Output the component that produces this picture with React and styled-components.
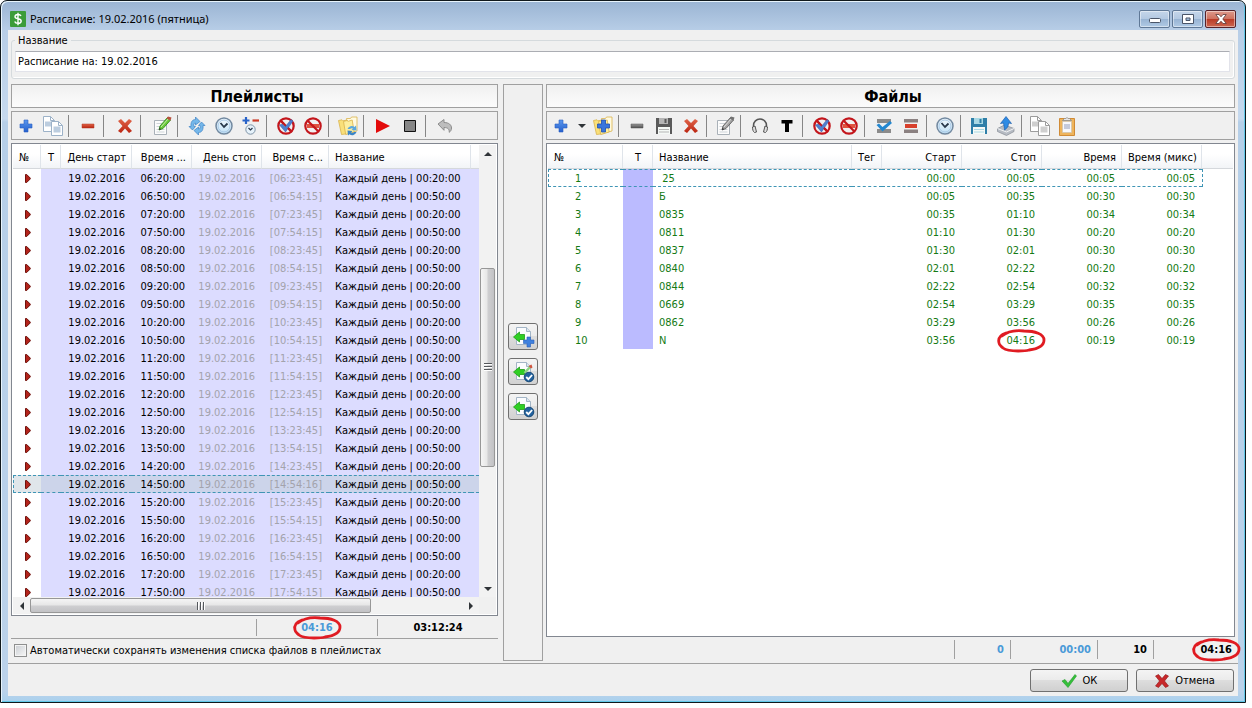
import React from "react"
import styled, { createGlobalStyle } from "styled-components"

const playlistTimes = ["06", "07", "08", "09", "10", "11", "12", "13", "14", "15", "16", "17"]

const playlists = playlistTimes.flatMap((hour) => [
    { start: `${hour}:20:00`, stop: `[${hour}:23:45]`, name: "Каждый день | 00:20:00" },
    {
        start: `${hour}:50:00`,
        stop: hour === "14" ? "[14:54:16]" : `[${hour}:54:15]`,
        name: "Каждый день | 00:50:00",
        selected: hour === "14",
    },
])

const files = [
    { name: "\u00a025", start: "00:00", stop: "00:05", time: "00:05", selected: true },
    { name: "Б", start: "00:05", stop: "00:35", time: "00:30" },
    { name: "0835", start: "00:35", stop: "01:10", time: "00:34" },
    { name: "0811", start: "01:10", stop: "01:30", time: "00:20" },
    { name: "0837", start: "01:30", stop: "02:01", time: "00:30" },
    { name: "0840", start: "02:01", stop: "02:22", time: "00:20" },
    { name: "0844", start: "02:22", stop: "02:54", time: "00:32" },
    { name: "0669", start: "02:54", stop: "03:29", time: "00:35" },
    { name: "0862", start: "03:29", stop: "03:56", time: "00:26" },
    { name: "N", start: "03:56", stop: "04:16", time: "00:19", marked: true },
]

const Icon = ({ children, size = 22 }) => (
    <svg width={size} height={size} viewBox="0 0 22 22" fill="none" aria-hidden="true">
        {children}
    </svg>
)

// shared pieces of the icons
const PlusShape = () => (
    <path d="M9 5h4v4h4v4h-4v4H9v-4H5V9h4z" fill="url(#blue)" stroke="#2a5fc4" strokeWidth=".6" />
)
const PagesShape = ({ line, fill }) => (
    <g stroke={line}>
        <path d="M1.500 1.500h7l4 4v11h-11z" fill="#fff" />
        <path d="M8.500 1.500v4h4" />
        <path d="M3 6.500h6v5H3z" fill={fill} stroke="none" />
        <path d="M9.500 6.500h7l4 4v10h-11z" fill="#fff" />
        <path d="M16.500 6.500v4h4" />
        <path d="M11.500 11.500h7v6h-7z" fill={fill} stroke="none" />
    </g>
)
const CrossShape = () => (
    <path d="M4 6l3-2 4 4 4-4 3 2-4.500 5L18 16l-3 2-4-4.500L7 18l-3-2 4.500-5z" fill="url(#red)" />
)
const ClockShape = () => (
    <g>
        <circle cx="11" cy="11" r="8" fill="url(#face)" stroke="#7289a0" strokeWidth="1.500" />
        <circle cx="11" cy="11" r="6" stroke="#a9c9e6" />
        <path d="M7.500 8l3.500 4 3.500-3.500" stroke="#28384a" strokeWidth="1.800" />
    </g>
)
const BanShape = () => (
    <g stroke="#c3161c" strokeWidth="2.200">
        <circle cx="11" cy="11" r="7.700" />
        <path d="M5.500 5.500l11 11" />
    </g>
)
const FolderShape = () => (
    <g stroke="#d9b24c" strokeWidth=".8">
        <path d="M9.500 3.500h4l1-1.500h5.500v14l-8 2z" fill="#fffae0" />
        <path d="M1.500 5.500L5 4.800l1 1 4-.8 2 13.500-7.500 1z" fill="#f9e07a" />
        <path d="M6.500 6.500l3.500-1 1.200.8 4-1.300 2 12-8.500 2.500z" fill="#fdee9e" />
    </g>
)
const FloppyShape = ({ body, label }) => (
    <g>
        <path d="M3 3h16v16H3z" fill={body} />
        <path d="M6 3h9v6H6z" fill={label} />
        <path d="M11.500 4h2v4h-2z" fill={body} />
        <path d="M5 12h12v7H5z" fill="#f5f9f6" />
        <path d="M6 14.500h10M6 17h10" stroke={label} />
    </g>
)
const NoteShape = ({ pencil, edge, tip }) => (
    <g>
        <path d="M3.500 5.500h12v14h-12z" fill="#fcfcfc" stroke="#a9b1b8" />
        <path d="M5.500 8.500h6M5.500 11.500h5M5.500 14.500h8M5.500 17h8" stroke="#ced4d8" />
        <path d="M8 15l1-4 7.500-8.500 3 2.500-7.500 8.500z" fill={pencil} stroke={edge} strokeWidth=".9" />
        <path d="M10 12l7-8" stroke="#fff" opacity=".6" />
        <path d="M15.500 3.500l1.500-2 3.500 1-1 3z" fill={tip} />
        <path d="M8 15l.6-2.200 1.500 1.400z" fill="#333" />
    </g>
)

const PlusIcon = () => <Icon><PlusShape /></Icon>
const CrossIcon = () => <Icon><CrossShape /></Icon>
const ClockIcon = () => <Icon><ClockShape /></Icon>
const CopyIcon = () => <Icon><PagesShape line="#9db2c8" fill="#bccddf" /></Icon>
const CopyGreyIcon = () => <Icon><PagesShape line="#9c9c9c" fill="#cfcfcf" /></Icon>
const MinusIcon = () => (
    <Icon><path d="M5 9h12v4H5z" fill="url(#red)" stroke="#b03a25" strokeWidth=".5" /></Icon>
)
const MinusGreyIcon = () => (
    <Icon><path d="M5 9h12v4H5z" fill="url(#grey)" stroke="#555" strokeWidth=".5" /></Icon>
)
const EditIcon = () => <Icon><NoteShape pencil="#6ccb3a" edge="#2f8b1e" tip="#b9513f" /></Icon>
const EditGreyIcon = () => <Icon><NoteShape pencil="#a5a5a5" edge="#5f5f5f" tip="#737373" /></Icon>
const RefreshIcon = () => (
    <Icon>
        <g fill="#74b7ea" stroke="#3f82c4" strokeWidth=".7">
            <path d="M5 11.500C4.500 7.500 6 4.500 9.500 4.500V2L14 6.500 9.500 10V8C7.800 8 7.500 9.500 8 11.500h1.500L6.500 15 3 11.500z" />
            <path d="M17 10.500c.5 4-1 7-4.500 7V20L8 15.500l4.500-3.500v2c1.700 0 2-1.500 1.500-3.500h-1.500L15.500 7l3.500 3.500z" />
        </g>
    </Icon>
)
const AddTimeIcon = () => (
    <Icon>
        <path d="M2.500 5.500h7M6 2v7" stroke="#2863c8" strokeWidth="2.200" />
        <path d="M12.500 5.500h6.500" stroke="#cc3a25" strokeWidth="2.200" />
        <circle cx="10.500" cy="14.500" r="4.700" fill="#e6f2fa" stroke="#7e93a6" />
        <path d="M8.500 13l2 2 2-2" stroke="#28384a" strokeWidth="1.200" />
    </Icon>
)
const BanCheckIcon = () => (
    <Icon>
        <BanShape />
        <path d="M4.500 10l3-1 2.500 3 6-7.500 2 1.500L10.500 17z" fill="#4f7fce" stroke="#3a5ba8" strokeWidth=".5" />
        <path d="M5.500 5.500l3.500 3.500M13 13l4 4" stroke="#c3161c" strokeWidth="2" />
    </Icon>
)
const BanMinusIcon = () => (
    <Icon>
        <path d="M5 9h12v4H5z" fill="#e0533f" />
        <BanShape />
    </Icon>
)
const FolderIcon = () => (
    <Icon>
        <FolderShape />
        <path d="M10.500 14a4.500 4.500 0 0 1 7-2l1.500-1.500.5 5-5-.5 1.500-1.500a2.500 2.500 0 0 0-3 .5z" fill="#5ba8de" />
        <path d="M19.500 17a4.500 4.500 0 0 1-7 2.200L11 20.500l-.5-5 5 .5-1.500 1.500a2.500 2.500 0 0 0 3-.5z" fill="#3c86c8" />
    </Icon>
)
const FolderPlusIcon = () => (
    <Icon>
        <FolderShape />
        <path d="M9.500 5h4v4h4v4h-4v4h-4v-4h-4V9h4z" fill="#3a76dc" stroke="#1f4fb0" strokeWidth=".8" />
    </Icon>
)
const PlayIcon = () => <Icon><path d="M4 4l14 7-14 7z" fill="#e30b0b" /></Icon>
const StopIcon = () => (
    <Icon><path d="M5.500 5.500h11v11h-11z" fill="#868686" stroke="#111" /></Icon>
)
const UndoIcon = () => (
    <Icon>
        <path d="M4 9l6-4.500v3c5 0 7.500 2.500 7.500 5.500 0 2-.8 3.300-2.300 4.300.3-3-1.200-4.800-5.200-4.800v2.800z" fill="#bdbdbd" stroke="#8c8c8c" />
    </Icon>
)
const HeadphonesIcon = () => (
    <Icon>
        <path d="M4.500 13V10.500a6.500 6.500 0 0 1 13 0V13" stroke="#555" strokeWidth="1.500" />
        <path d="M3.500 12l2.500-1 1.500 6-2 .5c-1.500-1-2-3-2-5.500zM18.500 12L16 11l-1.500 6 2 .5c1.500-1 2-3 2-5.500z" fill="#ddd" stroke="#555" />
    </Icon>
)
const TextIcon = () => <Icon><path d="M5.500 5h11v3.500H13V17H9V8.500H5.500z" fill="#000" /></Icon>
const CheckRowsIcon = () => (
    <Icon>
        <path d="M4 4h14v4H4zM4 14h14v4H4z" fill="#8b8b8b" />
        <path d="M3.500 10L6 8.500l3.500 3.500 7.500-6 2 2-9.500 8.500z" fill="#2387d0" />
    </Icon>
)
const MinusRowsIcon = () => (
    <Icon>
        <path d="M4 4h14v3.500H4zM4 14.500h14V18H4z" fill="#8b8181" />
        <path d="M5 9h12v4H5z" fill="#d8402c" />
    </Icon>
)
const UploadIcon = () => (
    <Icon>
        <path d="M2.500 13.500l7-3.500 9.500 3.500v3l-7.500 4-9-4z" fill="#b7bcc4" stroke="#858b94" strokeWidth=".7" />
        <path d="M2.500 13.500l9 3.500 7.500-3.500" stroke="#f2f4f6" />
        <path d="M11 1.500l5.500 7-3-.5c0 3-1 5-4 7C9.500 13 9 11 8.500 8L5.500 8.500z" fill="#2f8be4" stroke="#1d5fae" strokeWidth=".7" />
    </Icon>
)
const PasteIcon = () => (
    <Icon>
        <path d="M3.500 3.500h15v17h-15z" fill="#eeb45c" stroke="#d08b36" />
        <path d="M6.500 6.500h9v11h-9z" fill="#f7f8fc" stroke="#cfc3b0" strokeWidth=".7" />
        <path d="M8 9h6v5H8z" fill="#c5cadb" />
        <path d="M6.500 5.500l2-2h1.200a1.500 1.500 0 0 1 2.600 0h1.200l2 2z" fill="#e6e6e6" stroke="#8c8c8c" strokeWidth=".8" />
    </Icon>
)
const MoveIcon = ({ kind }) => (
    <svg width="24" height="24" viewBox="0 0 24 24" fill="none" aria-hidden="true">
        <path d="M5.500 2.500h10l4 4v13h-14z" fill="#fbfcfe" stroke="#a3b5c6" />
        <path d="M15.500 2.500v4h4" stroke="#a3b5c6" fill="#dbe5ee" />
        <path d="M2.500 12L8.500 7v2.500h5v5h-5V17z" fill="#2fcf24" stroke="#1e9c18" strokeWidth=".8" />
        {kind === "edit" && <path d="M13.500 13l6-6.500" stroke="#8ed684" strokeWidth="2.500" />}
        {kind === "edit" && <path d="M17.500 6l3-1.500 1 3-1.500 1z" fill="#d0543e" />}
        {kind === "add" ? (
            <path d="M16 12h3.500v3H23v3.500h-3.500V22H16v-3.500h-3.500V15H16z" fill="#3f80de" stroke="#2a5fb8" strokeWidth=".6" />
        ) : (
            <g>
                <circle cx="18" cy="17" r="4.800" fill="#23629f" stroke="#174875" />
                <path d="M15.200 17l2.200 2.200 3.700-4.200" stroke="#fff" strokeWidth="1.800" />
            </g>
        )}
    </svg>
)

const Gradients = () => (
    <HiddenSvg aria-hidden="true">
        <defs>
            <linearGradient id="blue" x1="0" y1="0" x2="0" y2="1">
                <stop offset="0" stopColor="#5b97ee" />
                <stop offset="1" stopColor="#2560cc" />
            </linearGradient>
            <linearGradient id="red" x1="0" y1="0" x2="0" y2="1">
                <stop offset="0" stopColor="#e0654a" />
                <stop offset="1" stopColor="#bb2410" />
            </linearGradient>
            <linearGradient id="grey" x1="0" y1="0" x2="0" y2="1">
                <stop offset="0" stopColor="#9a9a9a" />
                <stop offset="1" stopColor="#4f4f4f" />
            </linearGradient>
            <linearGradient id="face" x1="0" y1="0" x2="0" y2="1">
                <stop offset="0" stopColor="#f4fafe" />
                <stop offset="1" stopColor="#bfe0f5" />
            </linearGradient>
        </defs>
    </HiddenSvg>
)

const RedCircle = () => (
    <CircleMark viewBox="0 0 48 24" fill="none" aria-hidden="true">
        <path
            d="M9 4C3 6 1 10 2 14c0 2 2 3 4 5 4 3 9 3 15 3 5 0 8 0 11-1 8-1 15-4 15-10C47 5 38 2 27 2 18 1 10 3 5 7"
            stroke="#e01b22"
            strokeWidth="2.800"
            strokeLinecap="round"
        />
    </CircleMark>
)

const leftTools = [
    ["Добавить", PlusIcon], ["Копировать", CopyIcon], 8,
    ["Убрать", MinusIcon], 10,
    ["Удалить", CrossIcon], 10,
    ["Изменить", EditIcon], 8,
    ["Обновить", RefreshIcon], ["Время", ClockIcon], ["Сдвиг времени", AddTimeIcon], 8,
    ["Снять отметки", BanCheckIcon], ["Снять запреты", BanMinusIcon], 8,
    ["Папка", FolderIcon], 8,
    ["Пуск", PlayIcon], ["Остановить", StopIcon], 8,
    ["Отменить", UndoIcon],
]

const rightTools = [
    ["Добавить", PlusIcon], ["Ещё", "menu"], ["Добавить папку", FolderPlusIcon], 7,
    ["Убрать", MinusGreyIcon],
    ["Сохранить", () => <Icon><FloppyShape body="#5a5a5a" label="#b5b5b5" /></Icon>],
    ["Удалить", CrossIcon], 7,
    ["Изменить", EditGreyIcon], 8,
    ["Прослушать", HeadphonesIcon], ["Текст", TextIcon], 8,
    ["Снять отметки", BanCheckIcon], ["Снять запреты", BanMinusIcon], 8,
    ["Отметить строки", CheckRowsIcon], ["Убрать строки", MinusRowsIcon], 7,
    ["Время", ClockIcon], 7,
    ["Сохранить список", () => <Icon><FloppyShape body="#2f7fa8" label="#a8d8e4" /></Icon>],
    ["Загрузить", UploadIcon], 7,
    ["Копировать", CopyGreyIcon], ["Вставить", PasteIcon],
]

const Tools = ({ items }) => (
    <Toolbar>
        {items.map((item, index) => {
            if (typeof item === "number") return <Separator key={index} $width={item} />
            const [label, Glyph] = item
            if (Glyph === "menu") {
                return <ToolButton key={index} aria-label={label} $narrow><Arrow $dir="down" $size={4} /></ToolButton>
            }
            return <ToolButton key={index} aria-label={label}><Glyph /></ToolButton>
        })}
    </Toolbar>
)

const App = () => {
    const [title, setTitle] = React.useState("Расписание на: 19.02.2016")
    const [autoSave, setAutoSave] = React.useState(false)

    return (
        <>
            <GlobalStyle />
            <Gradients />
            <Window>
                <TitleBar>
                    <AppIcon viewBox="0 0 16 16" fill="none" aria-hidden="true">
                        <rect width="16" height="16" rx="1" fill="#3c9c3a" />
                        <path d="M11 5C10.500 3.800 9.500 3.500 8 3.500 6 3.500 5 4.400 5 5.700 5 8.600 11.200 7 11.200 10c0 1.500-1.200 2.400-3.200 2.400-1.700 0-2.900-.6-3.300-1.900M8 1.800v12.400" stroke="#fff" strokeWidth="1.400" />
                    </AppIcon>
                    <TitleText>Расписание: 19.02.2016 (пятница)</TitleText>
                    <WindowButton aria-label="Свернуть">
                        <svg width="12" height="10"><rect x=".5" y="4.500" width="11" height="4" rx="1" fill="#fff" stroke="#4a5568" /></svg>
                    </WindowButton>
                    <WindowButton aria-label="Развернуть">
                        <svg width="12" height="10"><path d="M.5.5h11v9H.5zM4 4v2.500h4V4z" fill="#fff" fillRule="evenodd" stroke="#4a5568" /></svg>
                    </WindowButton>
                    <WindowButton aria-label="Закрыть" $close>
                        <svg width="12" height="10"><path d="M.8.5h3.200l2 2.300 2-2.300h3.200L7.800 5l3.400 4.500H8L6 7.200 4 9.500H.8L4.200 5z" fill="#fff" stroke="#5a3a3a" strokeWidth=".8" /></svg>
                    </WindowButton>
                </TitleBar>
                <Client>
                    <NameGroup>
                        <legend><label htmlFor="name">Название</label></legend>
                        <NameInput id="name" value={title} onChange={(e) => setTitle(e.target.value)} />
                    </NameGroup>
                    <Panels>
                        <Panel $grow={487}>
                            <Heading>Плейлисты</Heading>
                            <Tools items={leftTools} />
                            <List $scroll>
                                <TableArea>
                                    <Table>
                                        <colgroup>
                                            <col width="28" /><col width="20" /><col width="71" /><col width="60" />
                                            <col width="70" /><col width="67" /><col /><col width="8" />
                                        </colgroup>
                                        <thead>
                                            <tr>
                                                <Th>№</Th><Th $align="center">T</Th>
                                                <Th $align="right">День старт</Th><Th $align="right">Время ...</Th>
                                                <Th $align="right">День стоп</Th><Th $align="right">Время с...</Th>
                                                <Th>Название</Th><Th />
                                            </tr>
                                        </thead>
                                        <tbody>
                                            {playlists.map((item) => (
                                                <Row key={item.start} $selected={item.selected} $tint>
                                                    <MarkerCell>
                                                        <svg width="6" height="9" viewBox="0 0 6 9"><path d="M.5.500h1.200l3.500 3.500v1L1.700 8.500H.5z" fill="#b3231b" stroke="#6e120c" /></svg>
                                                    </MarkerCell>
                                                    <Td $bg="#dcdcff" />
                                                    <Td $bg="#dcdcff" $align="right">19.02.2016</Td>
                                                    <Td $bg="#dcdcff" $align="right">{item.start}</Td>
                                                    <Td $bg="#dcdcff" $align="right" $color="#a3a3ac">19.02.2016</Td>
                                                    <Td $bg="#dcdcff" $align="right" $color="#a3a3ac">{item.stop}</Td>
                                                    <Td $bg="#dcdcff">{item.name}</Td>
                                                    <Td $bg="#dcdcff" />
                                                </Row>
                                            ))}
                                        </tbody>
                                    </Table>
                                </TableArea>
                                <Scrollbar>
                                    <ScrollEnd><Arrow $dir="up" $size={4} /></ScrollEnd>
                                    <Space $grow={106} />
                                    <Thumb $grow={198}><Grip /></Thumb>
                                    <Space $grow={114} />
                                    <ScrollEnd><Arrow $dir="down" $size={4} /></ScrollEnd>
                                </Scrollbar>
                                <Scrollbar $horizontal>
                                    <ScrollEnd><Arrow $dir="left" $size={4} /></ScrollEnd>
                                    <Thumb $horizontal $grow={340}><Grip $horizontal /></Thumb>
                                    <Space $grow={91} />
                                    <ScrollEnd><Arrow $dir="right" $size={4} /></ScrollEnd>
                                </Scrollbar>
                                <ScrollCorner />
                            </List>
                            <StatusBar $lined>
                                <StatusCell $grow={246} />
                                <StatusCell $width={121} $color="#4a9ad8" $center><Marked>04:16<RedCircle /></Marked></StatusCell>
                                <StatusCell $width={120} $center>03:12:24</StatusCell>
                            </StatusBar>
                            <CheckLabel>
                                <CheckBox type="checkbox" checked={autoSave} onChange={() => setAutoSave(!autoSave)} />
                                Автоматически сохранять изменения списка файлов в плейлистах
                            </CheckLabel>
                        </Panel>
                        <MoveColumn>
                            <MoveButton aria-label="Добавить в плейлист"><MoveIcon kind="add" /></MoveButton>
                            <MoveButton aria-label="Изменить плейлист"><MoveIcon kind="edit" /></MoveButton>
                            <MoveButton aria-label="Применить к плейлисту"><MoveIcon kind="check" /></MoveButton>
                        </MoveColumn>
                        <Panel $grow={689}>
                            <Heading>Файлы</Heading>
                            <Tools items={rightTools} />
                            <List>
                                <TableArea>
                                    <Table>
                                        <colgroup>
                                            <col width="75" /><col width="30" /><col /><col width="30" /><col width="80" />
                                            <col width="80" /><col width="80" /><col width="80" /><col width="31" />
                                        </colgroup>
                                        <thead>
                                            <tr>
                                                <Th>№</Th><Th $align="center">T</Th><Th>Название</Th><Th>Тег</Th>
                                                <Th $align="right">Старт</Th><Th $align="right">Стоп</Th>
                                                <Th $align="right">Время</Th><Th $align="right">Время (микс)</Th><Th />
                                            </tr>
                                        </thead>
                                        <tbody>
                                            {files.map((file, index) => (
                                                <Row key={index} $selected={file.selected} $green>
                                                    <NumberCell>{index + 1}</NumberCell>
                                                    <Td $bg="#bbbbff" />
                                                    <Td>{file.name}</Td>
                                                    <Td />
                                                    <Td $align="right">{file.start}</Td>
                                                    <Td $align="right">
                                                        {file.marked ? <Marked>{file.stop}<RedCircle /></Marked> : file.stop}
                                                    </Td>
                                                    <Td $align="right">{file.time}</Td>
                                                    <Td $align="right">{file.time}</Td>
                                                    <RestCell />
                                                </Row>
                                            ))}
                                        </tbody>
                                    </Table>
                                </TableArea>
                            </List>
                            <StatusBar>
                                <StatusCell $grow={408} />
                                <StatusCell $width={56} $color="#4a9ad8">0</StatusCell>
                                <StatusCell $width={87} $color="#4a9ad8">00:00</StatusCell>
                                <StatusCell $width={56}>10</StatusCell>
                                <StatusCell $width={81} $flush><Marked>04:16<RedCircle /></Marked></StatusCell>
                            </StatusBar>
                        </Panel>
                    </Panels>
                    <Footer>
                        <DialogButton>
                            <svg width="16" height="14" viewBox="0 0 16 14"><path d="M1 7l3-1.500 3 4L14 .500l1.500 1.500L7 13.500z" fill="#35c03a" stroke="#239a2c" strokeWidth=".6" /></svg>
                            ОК
                        </DialogButton>
                        <DialogButton>
                            <svg width="14" height="14" viewBox="0 0 14 14"><path d="M.5 2L3.500.500 7 4.500l3.500-4 3 1.500L9.500 7l4 5-3 1.500L7 9.500l-3.500 4-3-1.500 4-5z" fill="#c8282a" stroke="#8e1418" strokeWidth=".6" /></svg>
                            Отмена
                        </DialogButton>
                    </Footer>
                </Client>
            </Window>
        </>
    )
}

const GlobalStyle = createGlobalStyle`
    * {
        box-sizing: border-box;
    }
    body {
        margin: 0;
        background: #ffffff;
        overflow: hidden;
    }
    body, button, input {
        font-family: "DejaVu Sans Condensed", "Noto Sans", sans-serif;
        font-size: 11px;
        color: #000000;
    }
`
const HiddenSvg = styled.svg`
    position: absolute;
    width: 0;
    height: 0;
`
const Window = styled.div`
    display: flex;
    flex-direction: column;
    height: calc(100vh - 5px);
    margin-right: 6px;
    padding: 0 7px 6px 7px;
    border: 1px solid #10181c;
    border-radius: 7px 7px 0 0;
    box-shadow: inset 1px 1px 0 #e8f4fc, inset -1px -1px 0 #62c8e8;
    background: linear-gradient(#9ab4d3 0px, #b8cee7 30px, #c6d9ee 118px, #b6cfe8 121px, #bbd2ea 690px, #a9d1ee 100%);
`
const TitleBar = styled.header`
    display: flex;
    align-items: center;
    gap: 2px;
    height: 29px;
    padding: 6px 2px 0 2px;
    flex: none;
`
const AppIcon = styled.svg`
    width: 16px;
    height: 16px;
`
const TitleText = styled.h1`
    flex: 1;
    margin: 0 0 0 2px;
    font-family: "Noto Sans", sans-serif;
    font-size: 11px;
    font-weight: normal;
    line-height: 16px;
`
const WindowButton = styled.button`
    display: flex;
    align-items: center;
    justify-content: center;
    width: 31px;
    height: 18px;
    padding: 0;
    border: 1px solid ${props => props.$close ? "#56222a" : "#5f7896"};
    border-radius: 2px;
    box-shadow: inset 0 0 0 1px rgba(255, 255, 255, 0.45);
    background: ${props => props.$close
        ? "linear-gradient(#dd9a8c, #cf7260 48%, #b93a26 50%, #cc6650)"
        : "linear-gradient(#c5d6ea, #b3c9e2 48%, #97b3d3 50%, #b0cae5)"};
`
const Client = styled.main`
    display: flex;
    flex-direction: column;
    flex: 1;
    min-height: 0;
    padding: 3px 3px 0 3px;
    background: #f0f0f0;
`
const NameGroup = styled.fieldset`
    flex: none;
    margin: 0;
    padding: 3px 4px 6px 3px;
    border: 1px solid #d5dadd;
    border-radius: 3px;
    box-shadow: inset -1px -1px 0 #ffffff;

    legend {
        padding: 1px 3px 0 3px;
        line-height: 14px;
    }
`
const NameInput = styled.input`
    display: block;
    width: 100%;
    height: 21px;
    padding: 0 2px;
    border: 1px solid #e2e3ea;
    border-top-color: #abadb3;
    background: #ffffff;
`
const Panels = styled.div`
    display: flex;
    flex: 1;
    min-height: 0;
    margin-top: 5px;
`
const Panel = styled.section`
    display: flex;
    flex-direction: column;
    flex: ${props => props.$grow} 1 0;
    min-width: 0;
    gap: 3px;
`
const Heading = styled.h2`
    flex: none;
    height: 24px;
    margin: 0;
    padding-left: 5px;
    border: 1px solid #a0a0a0;
    background: linear-gradient(#f0f0f0, #fcfcfc);
    font-size: 16px;
    line-height: 23px;
    text-align: center;
`
const Toolbar = styled.div`
    display: flex;
    align-items: center;
    flex: none;
    height: 29px;
    border: 1px solid #a0a0a0;
`
const ToolButton = styled.button`
    display: flex;
    align-items: center;
    justify-content: center;
    width: ${props => props.$narrow ? 15 : 27}px;
    height: 26px;
    padding: 0;
    border: 0;
    background: none;
`
const Separator = styled.div`
    flex: none;
    width: ${props => props.$width}px;
    height: 22px;
    padding-left: 2px;

    &::before {
        content: "";
        display: block;
        width: 1px;
        height: 100%;
        background: #868686;
    }
`
const List = styled.div`
    display: grid;
    grid-template: ${props => props.$scroll ? "minmax(0, 1fr) 17px / minmax(0, 1fr) 17px" : "minmax(0, 1fr) / minmax(0, 1fr)"};
    flex: 1 1 0;
    min-height: 0;
    padding: 1px;
    border: 1px solid #828790;
    background: #ffffff;
`
const TableArea = styled.div`
    min-height: 0;
    overflow: hidden;
`
const Table = styled.table`
    width: 100%;
    table-layout: fixed;
    border-spacing: 0;
`
const Th = styled.th`
    height: 24px;
    padding: 2px 5px 0 6px;
    border-right: 1px solid #dfe4ea;
    border-bottom: 1px solid #d5d8dc;
    background: linear-gradient(#ffffff 40%, #f2f4f7);
    font-weight: normal;
    text-align: ${props => props.$align || "left"};
    white-space: nowrap;

    &:last-child {
        border-right: 0;
    }
`
const Td = styled.td`
    height: 18px;
    padding: 3px 7px 1px 6px;
    background: ${props => props.$bg || "transparent"};
    color: ${props => props.$color || "inherit"};
    line-height: 14px;
    text-align: ${props => props.$align || "left"};
    white-space: nowrap;
`
const MarkerCell = styled(Td)`
    padding: 0 0 0 12px;

    svg {
        display: block;
    }
`
const NumberCell = styled(Td)`
    padding-left: 27px;
`
const RestCell = styled(Td)``
const dashed = "1px dashed #3f95b5"
const Row = styled.tr`
    color: ${props => props.$green ? "#147a14" : "#000000"};

    ${props => props.$selected && `
        ${Td} {
            padding-top: 2px;
            padding-bottom: 0;
            border-top: ${dashed};
            border-bottom: ${dashed};
            ${props.$tint ? "background: #ccd4ea;" : ""}
        }
        ${MarkerCell} {
            padding-top: 0;
            ${props.$tint ? "background: #e0e6ea;" : ""}
        }
        td:first-child {
            border-left: ${dashed};
            ${props.$tint ? "padding-left: 11px;" : "padding-left: 26px;"}
        }
        ${RestCell} {
            border-top: 0;
            border-bottom: 0;
            border-left: ${dashed};
        }
    `}
`
const Scrollbar = styled.div`
    display: flex;
    flex-direction: ${props => props.$horizontal ? "row" : "column"};
    background: #f2f2f2;
`
const ScrollCorner = styled.div`
    background: #f0f0f0;
`
const ScrollEnd = styled.div`
    display: flex;
    align-items: center;
    justify-content: center;
    flex: none;
    width: 17px;
    height: 17px;
`
const Space = styled.div`
    flex: ${props => props.$grow} 1 0;
`
const Thumb = styled.div`
    display: flex;
    align-items: center;
    justify-content: center;
    flex: ${props => props.$grow} 1 0;
    margin: ${props => props.$horizontal ? "1px 0" : "0 1px"};
    border: 1px solid #979797;
    border-radius: 2px;
    background: linear-gradient(${props => props.$horizontal ? "180deg" : "90deg"}, #f5f5f5, #e6e6e6 48%, #cfcfd1 52%, #c2c2c5);
`
const Grip = styled.div`
    width: 8px;
    height: 8px;
    background: repeating-linear-gradient(${props => props.$horizontal ? "90deg" : "180deg"}, #55585c 0 1px, #ffffff 1px 2px, transparent 2px 3px);
`
const sides = { up: "bottom", down: "top", left: "right", right: "left" }
const edges = { up: "top", down: "bottom", left: "left", right: "right" }
const Arrow = styled.span`
    width: 0;
    height: 0;
    border: ${props => props.$size}px solid transparent;
    border-${props => sides[props.$dir]}-color: #303438;
    border-${props => edges[props.$dir]}-width: 0;
`
const StatusBar = styled.div`
    display: flex;
    flex: none;
    height: ${props => props.$lined ? 23 : 24}px;
    margin-top: -3px;
    padding: 3px 0 2px 0;
    border-bottom: ${props => props.$lined ? "1px solid #a0a0a0" : "0"};
`
const StatusCell = styled.div`
    display: flex;
    align-items: center;
    justify-content: ${props => props.$center ? "center" : "flex-end"};
    flex: ${props => props.$width ? `0 0 ${props.$width}px` : `${props.$grow} 1 0`};
    padding: 0 ${props => props.$center ? 0 : props.$flush ? 3 : 6}px 0 0;
    border-right: 1px solid #a0a0a0;
    color: ${props => props.$color || "#000000"};
    font-weight: bold;

    &:last-child {
        border-right: 0;
    }
`
const Marked = styled.span`
    position: relative;
`
const CircleMark = styled.svg`
    position: absolute;
    top: 50%;
    left: 50%;
    width: 48px;
    height: 24px;
    margin: -12px 0 0 -24px;
    overflow: visible;
    pointer-events: none;
`
const CheckLabel = styled.label`
    display: flex;
    align-items: center;
    gap: 3px;
    flex: none;
    height: 22px;
    margin-top: -3px;
    padding-left: 3px;
    white-space: nowrap;
`
const CheckBox = styled.input`
    appearance: none;
    width: 13px;
    height: 13px;
    margin: 0;
    border: 1px solid #8e8f8f;
    background: linear-gradient(135deg, #c9cdd2, #f8f8f8);
    box-shadow: inset 0 0 0 1px #f4f4f4;

    &:checked {
        background: #3d6fb0;
    }
`
const MoveColumn = styled.div`
    display: flex;
    flex-direction: column;
    align-items: center;
    justify-content: center;
    gap: 8px;
    flex: none;
    width: 40px;
    margin: 0 3px 0 5px;
    padding-bottom: 2px;
    border: 1px solid #a0a0a0;
`
const MoveButton = styled.button`
    display: flex;
    align-items: center;
    justify-content: center;
    width: 30px;
    height: 27px;
    padding: 0;
    border: 1px solid #707070;
    border-radius: 3px;
    background: linear-gradient(#f4f4f4, #ebebeb 48%, #dddddd 50%, #d2d2d2);
`
const Footer = styled.footer`
    display: flex;
    justify-content: flex-end;
    gap: 8px;
    flex: none;
    margin: 2px -3px 0 -3px;
    padding: 5px 4px 4px 4px;
    border-top: 1px solid #a0a0a0;
`
const DialogButton = styled.button`
    display: flex;
    align-items: center;
    justify-content: center;
    gap: 6px;
    width: 98px;
    height: 23px;
    padding: 0;
    border: 1px solid #707070;
    border-radius: 3px;
    background: linear-gradient(#f4f4f4, #ebebeb 48%, #dddddd 50%, #d0d0d0);
`

export default App
